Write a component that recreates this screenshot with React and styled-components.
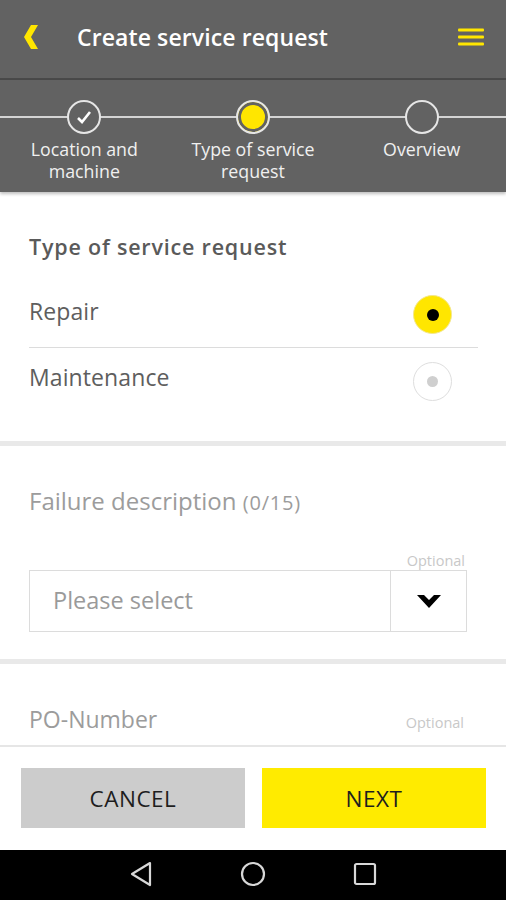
import React from "react";
import styled, { createGlobalStyle } from "styled-components";

const GlobalStyle = createGlobalStyle`
  html, body {
    margin: 0;
    padding: 0;
    background: #fff;
  }
  #root {
    height: 900px;
  }
  * {
    box-sizing: border-box;
  }
`;

const Screen = styled.div`
  width: 506px;
  height: 900px;
  display: flex;
  flex-direction: column;
  font-family: "Open Sans", "Noto Sans", sans-serif;
  overflow: hidden;
`;

const Header = styled.header`
  height: 80px;
  background: #626262;
  border-bottom: 2px solid #494949;
  display: flex;
  align-items: center;
  padding: 0 22px 4px 24px;
`;

const Title = styled.h1`
  flex: 1;
  margin: 0 0 0 38px;
  color: #fff;
  font-size: 23px;
  font-weight: 600;
  letter-spacing: 0.1px;
`;

const Stepper = styled.div`
  height: 112px;
  background: #626262;
  display: grid;
  grid-template-columns: repeat(3, 1fr);
  position: relative;
  box-shadow: 0 2px 3px rgba(0, 0, 0, 0.25);
  z-index: 1;
`;

const StepLine = styled.div`
  position: absolute;
  left: 0;
  right: 0;
  top: 36px;
  height: 2px;
  background: #d4d4d4;
`;

const Step = styled.div`
  display: flex;
  flex-direction: column;
  align-items: center;
  padding-top: 20px;
  position: relative;
`;

const StepDot = styled.div`
  width: 34px;
  height: 34px;
  border-radius: 50%;
  border: 2px solid #e6e6e6;
  background: ${(p) => (p.$active ? "#ffe600" : "#626262")};
  box-shadow: ${(p) => (p.$active ? "inset 0 0 0 3px #626262" : "none")};
  display: flex;
  align-items: center;
  justify-content: center;
`;

const StepLabel = styled.div`
  margin-top: 4px;
  color: #f0f0f0;
  font-size: 17.8px;
  line-height: 22px;
  text-align: center;
  white-space: nowrap;
`;

const Section = styled.section`
  background: #fff;
  height: ${(p) => p.$h}px;
  padding: ${(p) => p.$pad || "0 28px 0 29px"};
  border-bottom: ${(p) => (p.$sep ? "5px solid #e9e9e9" : "none")};
  display: flex;
  flex-direction: column;
`;

const Heading = styled.h2`
  margin: 0;
  color: #5a5a5a;
  font-size: 21.5px;
  font-weight: 600;
  letter-spacing: 0.8px;
  line-height: 28px;
`;

const OptionRow = styled.label`
  display: flex;
  align-items: center;
  justify-content: space-between;
  height: 66px;
  border-bottom: ${(p) => (p.$divider ? "1.5px solid #dcdcdc" : "none")};
  padding-right: 26px;
`;

const OptionText = styled.span`
  color: #5e5e5e;
  font-size: 23px;
  letter-spacing: 0.1px;
  padding-bottom: 8px;
`;

const Radio = styled.span`
  width: 39px;
  height: 39px;
  border-radius: 50%;
  background: ${(p) => (p.$checked ? "#ffe600" : "#fff")};
  border: ${(p) => (p.$checked ? "1px solid #f4e78a" : "1.5px solid #dedede")};
  display: flex;
  align-items: center;
  justify-content: center;

  &::after {
    content: "";
    width: ${(p) => (p.$checked ? 12 : 11)}px;
    height: ${(p) => (p.$checked ? 12 : 11)}px;
    border-radius: 50%;
    background: ${(p) => (p.$checked ? "#000" : "#cfcfcf")};
  }
`;

const FieldTitle = styled.div`
  color: #9c9c9c;
  font-size: ${(p) => p.$size || 24}px;
  line-height: 30px;

  small {
    font-size: 20px;
    letter-spacing: 0.8px;
  }
`;

const FieldHead = styled.div`
  display: flex;
  align-items: center;
  justify-content: space-between;
`;

const Optional = styled.span`
  color: #c8c8c8;
  font-size: 14.5px;
  text-align: right;
  padding-right: ${(p) => p.$right || 12}px;
  margin-top: ${(p) => p.$top || 0}px;
`;

const Select = styled.div`
  display: flex;
  height: 62px;
  margin-right: 10px;
  border: 1.5px solid #dcdcdc;
`;

const SelectText = styled.div`
  flex: 1;
  display: flex;
  align-items: center;
  padding-left: 23px;
  color: #9a9a9a;
  font-size: 23.5px;
  padding-bottom: 2px;
`;

const SelectButton = styled.div`
  width: 76px;
  border-left: 1.5px solid #dcdcdc;
  display: flex;
  align-items: center;
  justify-content: center;
`;

const Footer = styled.div`
  flex: 1;
  background: #fff;
  border-top: 2px solid #e6e6e6;
  display: grid;
  grid-template-columns: 1fr 1fr;
  gap: 17px;
  padding: 21px 20px 20px 21px;
`;

const Button = styled.button`
  border: none;
  height: 60px;
  background: ${(p) => (p.$primary ? "#ffeb00" : "#cccccc")};
  color: #1e1e1e;
  font-family: inherit;
  font-size: 22.5px;
  letter-spacing: 0.5px;
  text-transform: uppercase;
`;

const NavBar = styled.nav`
  height: 50px;
  background: #000;
  display: flex;
  align-items: center;
  justify-content: center;
  gap: 87px;
  padding-bottom: 2px;
`;

const BackIcon = () => (
  <svg width="15" height="24" viewBox="0 0 15 24">
    <polygon points="14,0 7,0 0,12 7,24 14,24 7,12" fill="#ffe600" />
  </svg>
);

const MenuIcon = () => (
  <svg width="26" height="18" viewBox="0 0 26 18">
    <rect x="0" y="0.5" width="26" height="3" rx="1" fill="#ffe600" />
    <rect x="0" y="7.5" width="26" height="3" rx="1" fill="#ffe600" />
    <rect x="0" y="14.5" width="26" height="3" rx="1" fill="#ffe600" />
  </svg>
);

const CheckIcon = () => (
  <svg width="16" height="14" viewBox="0 0 16 14">
    <path d="M2 8 L6 12 L14 2" fill="none" stroke="#fff" strokeWidth="2.6" />
  </svg>
);

const ChevronDown = () => (
  <svg width="24" height="13" viewBox="0 0 24 13">
    <polygon points="0,0 7,0 12,5 17,0 24,0 12,13" fill="#000" />
  </svg>
);

const NavBack = () => (
  <svg width="24" height="26" viewBox="0 0 24 26">
    <path d="M21 2 L3 13 L21 24 Z" fill="none" stroke="#d8d8d8" strokeWidth="2.2" strokeLinejoin="round" />
  </svg>
);

const NavHome = () => (
  <svg width="26" height="26" viewBox="0 0 26 26">
    <circle cx="13" cy="13" r="11" fill="none" stroke="#d8d8d8" strokeWidth="2.2" />
  </svg>
);

const NavRecent = () => (
  <svg width="24" height="24" viewBox="0 0 24 24">
    <rect x="2" y="2" width="20" height="20" rx="1.5" fill="none" stroke="#d8d8d8" strokeWidth="2.2" />
  </svg>
);

const steps = [
  { label: ["Location and", "machine"], state: "done" },
  { label: ["Type of service", "request"], state: "active" },
  { label: ["Overview"], state: "todo" },
];

export default function App() {
  return (
    <>
      <GlobalStyle />
      <Screen>
        <Header>
          <BackIcon />
          <Title>Create service request</Title>
          <MenuIcon />
        </Header>

        <Stepper>
          <StepLine />
          {steps.map((s) => (
            <Step key={s.label[0]}>
              <StepDot $active={s.state === "active"}>
                {s.state === "done" && <CheckIcon />}
              </StepDot>
              <StepLabel>
                {s.label.map((l) => (
                  <div key={l}>{l}</div>
                ))}
              </StepLabel>
            </Step>
          ))}
        </Stepper>

        <Section $h={254} $sep $pad="41px 28px 0 29px">
          <Heading>Type of service request</Heading>
          <OptionRow $divider style={{ marginTop: 21 }}>
            <OptionText>Repair</OptionText>
            <Radio $checked />
          </OptionRow>
          <OptionRow>
            <OptionText>Maintenance</OptionText>
            <Radio />
          </OptionRow>
        </Section>

        <Section $h={218} $sep $pad="40px 29px 0 29px">
          <FieldTitle>
            Failure description <small>(0/15)</small>
          </FieldTitle>
          <Optional $top={33}>Optional</Optional>
          <Select>
            <SelectText>Please select</SelectText>
            <SelectButton>
              <ChevronDown />
            </SelectButton>
          </Select>
        </Section>

        <Section $h={81} $pad="40px 29px 0 29px">
          <FieldHead>
            <FieldTitle $size={23}>PO-Number</FieldTitle>
            <Optional $right={13} $top={6}>Optional</Optional>
          </FieldHead>
        </Section>

        <Footer>
          <Button>Cancel</Button>
          <Button $primary>Next</Button>
        </Footer>

        <NavBar>
          <NavBack />
          <NavHome />
          <NavRecent />
        </NavBar>
      </Screen>
    </>
  );
}
